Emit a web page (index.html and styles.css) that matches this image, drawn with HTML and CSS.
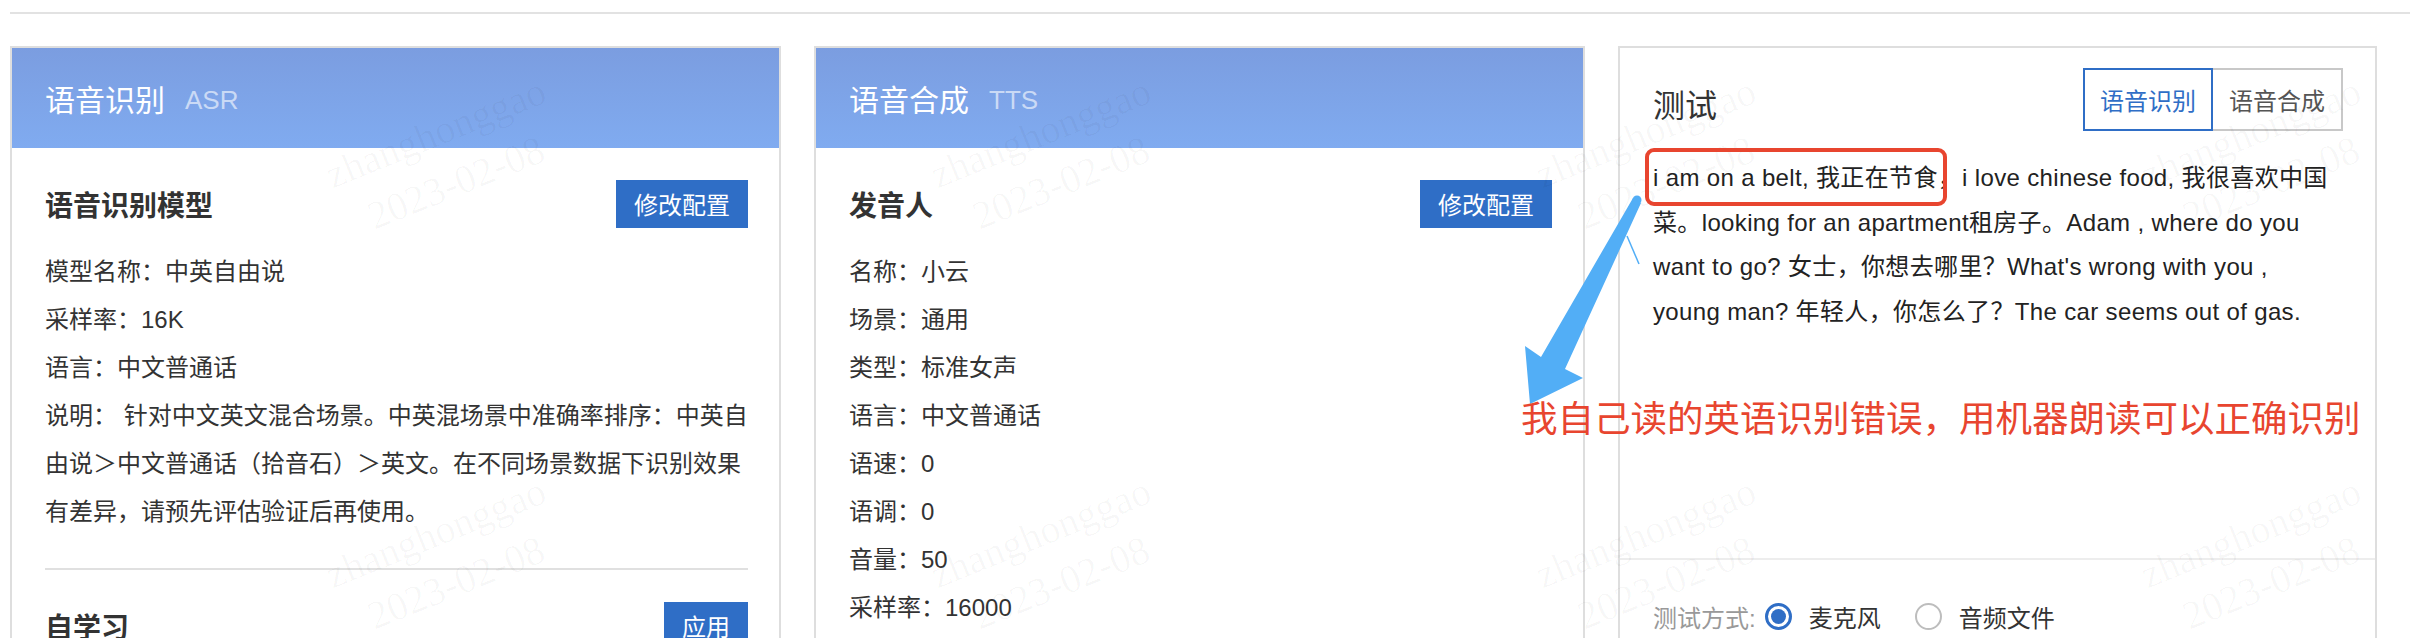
FILE: index.html
```html
<!DOCTYPE html>
<html lang="zh-CN">
<head>
<meta charset="utf-8">
<title>语音识别 / 语音合成</title>
<link rel="stylesheet" href="styles.css">
</head>
<body>
<div class="page">
  <div class="topbar"></div>
  <div class="cards">
    <section class="card">
      <header class="card-head"><span class="card-title">语音识别</span><span class="card-sub">ASR</span></header>
      <div class="card-body">
        <div class="sec-head"><h3>语音识别模型</h3><button class="btn">修改配置</button></div>
        <div class="info">
          <p>模型名称：中英自由说</p>
          <p>采样率：16K</p>
          <p>语言：中文普通话</p>
          <p class="desc">说明： 针对中文英文混合场景。中英混场景中准确率排序：中英自由说＞中文普通话（拾音石）＞英文。在不同场景数据下识别效果有差异，请预先评估验证后再使用。</p>
        </div>
        <hr class="divider">
        <div class="sec-head"><h3>自学习</h3><button class="btn">应用</button></div>
      </div>
    </section>

    <section class="card">
      <header class="card-head"><span class="card-title">语音合成</span><span class="card-sub">TTS</span></header>
      <div class="card-body">
        <div class="sec-head"><h3>发音人</h3><button class="btn">修改配置</button></div>
        <div class="info">
          <p>名称：小云</p>
          <p>场景：通用</p>
          <p>类型：标准女声</p>
          <p>语言：中文普通话</p>
          <p>语速：0</p>
          <p>语调：0</p>
          <p>音量：50</p>
          <p>采样率：16000</p>
        </div>
      </div>
    </section>

    <section class="card test">
      <div class="test-top">
        <div class="test-head">
          <h2 class="test-title">测试</h2>
          <div class="seg"><span class="seg-btn active">语音识别</span><span class="seg-btn">语音合成</span></div>
        </div>
        <p class="result">i am on a belt, 我正在节食，i love chinese food, 我很喜欢中国<br>菜。looking for an apartment租房子。Adam , where do you<br>want to go? 女士，你想去哪里？What's wrong with you ,<br>young man? 年轻人，你怎么了？The car seems out of gas.</p>
      </div>
      <div class="test-bottom">
        <span class="label">测试方式:</span>
        <span class="radio on"></span><span class="opt">麦克风</span>
        <span class="radio"></span><span class="opt">音频文件</span>
      </div>
    </section>
  </div>
</div>

<div class="watermarks">
  <div class="wm-cell"><div class="wm">zhanghonggao<br>2023-02-08</div></div>
  <div class="wm-cell"><div class="wm">zhanghonggao<br>2023-02-08</div></div>
  <div class="wm-cell"><div class="wm">zhanghonggao<br>2023-02-08</div></div>
  <div class="wm-cell"><div class="wm">zhanghonggao<br>2023-02-08</div></div>
  <div class="wm-cell"><div class="wm">zhanghonggao<br>2023-02-08</div></div>
  <div class="wm-cell"><div class="wm">zhanghonggao<br>2023-02-08</div></div>
  <div class="wm-cell"><div class="wm">zhanghonggao<br>2023-02-08</div></div>
  <div class="wm-cell"><div class="wm">zhanghonggao<br>2023-02-08</div></div>
</div>

<div class="annot-box"></div>
<svg class="annot-arrow" width="2410" height="638" viewBox="0 0 2410 638" aria-hidden="true">
  <polygon points="1633,198 1541,357 1525,346 1530,404 1583,378 1565,369 1641,203" fill="#52aef6"/>
  <circle cx="1637" cy="200" r="4.5" fill="#52aef6"/>
  <line x1="1627" y1="236" x2="1639" y2="264" stroke="#52aef6" stroke-width="1.5"/>
</svg>
<div class="annot-text">我自己读的英语识别错误，用机器朗读可以正确识别</div>
</body>
</html>
```

FILE: styles.css
```css
* {
  box-sizing: border-box;
  margin: 0;
  padding: 0;
}

html, body {
  overflow: hidden;
}

body {
  position: relative;
  width: 2410px;
  height: 638px;
  background: #fff;
  color: #333;
  font-family: "Liberation Sans", "Noto Sans CJK SC", sans-serif;
}

.page {
  padding-left: 10px;
}

.topbar {
  height: 14px;
  border-bottom: 2px solid #e2e2e2;
}

.cards {
  display: grid;
  grid-template-columns: 771px 771px 759px;
  column-gap: 33px;
  margin-top: 32px;
  min-height: 720px;
}

.card {
  border: 2px solid #dedede;
}

.card-head {
  display: flex;
  align-items: center;
  height: 100px;
  padding-left: 33px;
  background: linear-gradient(#7b9de0, #80abf0);
  color: #fff;
}

.card-title {
  font-family: "Noto Sans CJK SC", sans-serif;
  font-size: 30px;
  font-weight: 400;
}

.card-sub {
  margin-left: 20px;
  margin-top: 4px;
  font-size: 26px;
  color: rgba(255, 255, 255, 0.6);
}

.card-body {
  padding: 32px 31px 0 33px;
}

.sec-head {
  display: flex;
  justify-content: space-between;
  align-items: center;
  height: 48px;
}

.sec-head h3 {
  font-size: 28px;
  font-weight: 700;
  color: #333;
}

.btn {
  height: 48px;
  padding: 0 18px;
  border: 0;
  background: #2f6ec6;
  color: #fff;
  font-family: "Noto Sans CJK SC", sans-serif;
  font-size: 24px;
  line-height: 48px;
}

.info {
  margin-top: 20px;
  font-size: 24px;
  line-height: 48px;
  color: #333;
}

.desc {
  margin-right: -6px;
}

.divider {
  height: 0;
  border: 0;
  border-top: 2px solid #e0e0e0;
  margin-top: 32px;
}

.divider + .sec-head {
  margin-top: 32px;
}

/* test card */
.test-top {
  height: 512px;
  padding: 20px 32px 0 33px;
  border-bottom: 2px solid #ededed;
}

.test-head {
  display: flex;
  justify-content: space-between;
  align-items: center;
  height: 63px;
}

.test-title {
  margin-top: 6px;
  font-family: "Noto Sans CJK SC", sans-serif;
  font-size: 32px;
  font-weight: 400;
  color: #333;
}

.seg {
  display: flex;
}

.seg-btn {
  width: 130px;
  height: 63px;
  border: 2px solid #c8c8c8;
  font-family: "Noto Sans CJK SC", sans-serif;
  font-size: 24px;
  line-height: 59px;
  text-align: center;
  color: #555;
}

.seg-btn + .seg-btn {
  border-left: 0;
}

.seg-btn.active {
  border-color: #2f6ec6;
  color: #2f6ec6;
}

.result {
  margin-top: 25px;
  font-size: 24px;
  line-height: 44.5px;
  letter-spacing: 0.35px;
  color: #222;
  white-space: nowrap;
}

.test-bottom {
  display: flex;
  align-items: center;
  height: 80px;
  padding: 32px 33px 0;
}

.label {
  margin-right: 9px;
  font-size: 24px;
  color: #999;
}

.radio {
  flex: none;
  width: 27px;
  height: 27px;
  border-radius: 50%;
  border: 2px solid #bdbdbd;
  background: #fff;
}

.radio.on {
  border: 3px solid #2f6ec6;
  padding: 3px;
  background: #2f6ec6;
  background-clip: content-box;
}

.opt {
  margin-left: 17px;
  margin-right: 34px;
  font-size: 24px;
  color: #333;
}

/* watermark overlay */
.watermarks {
  position: absolute;
  left: 143px;
  top: -42.5px;
  display: grid;
  grid-template-columns: repeat(4, 605px);
  grid-auto-rows: 400px;
  pointer-events: none;
}

.wm-cell {
  display: flex;
  align-items: center;
  justify-content: center;
}

.wm {
  width: 260px;
  font-family: "Liberation Serif", serif;
  font-size: 40px;
  line-height: 54px;
  text-align: center;
  white-space: nowrap;
  color: rgba(0, 0, 0, 0.03);
  transform: rotate(-22deg);
}

/* annotations */
.annot-box {
  position: absolute;
  left: 1645px;
  top: 148px;
  width: 302px;
  height: 58px;
  border: 4px solid #e8452f;
  border-radius: 9px;
}

.annot-arrow {
  position: absolute;
  left: 0;
  top: 0;
  pointer-events: none;
}

.annot-text {
  position: absolute;
  left: 1521px;
  top: 399px;
  font-family: "Noto Sans CJK SC", sans-serif;
  font-size: 36.5px;
  line-height: 1;
  color: #e8452f;
  white-space: nowrap;
}
```
